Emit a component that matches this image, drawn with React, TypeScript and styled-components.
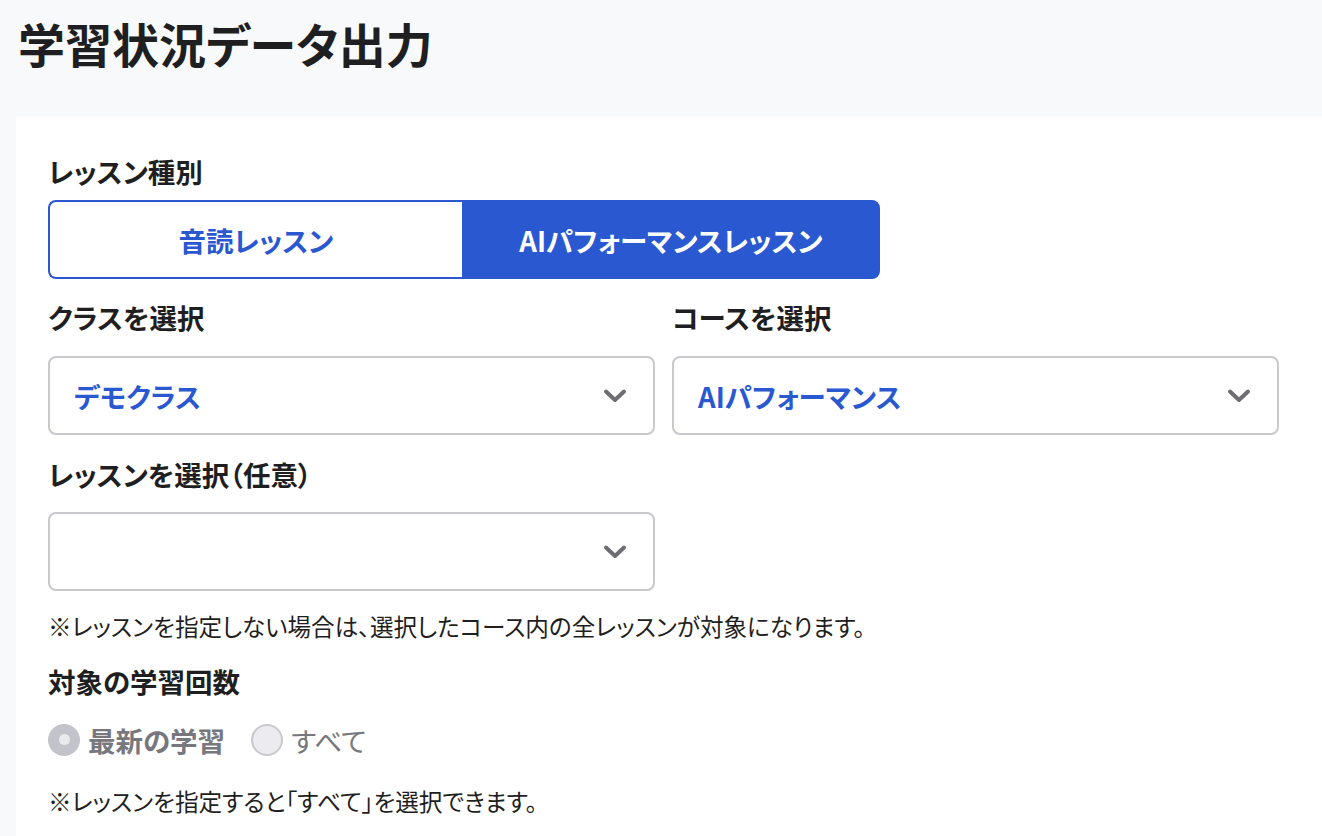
import styled, { createGlobalStyle } from "styled-components";

const GlobalStyle = createGlobalStyle`
  html, body {
    margin: 0;
    padding: 0;
    background: #f8f9fb;
    font-family: "Noto Sans CJK JP", "Noto Sans", sans-serif;
    font-feature-settings: "palt";
    color: #1f1f21;
  }
`;

const Page = styled.div`
  min-height: 836px;
  background: #f8f9fb;
`;

const Header = styled.header`
  padding: 11px 18px 42px;
`;

const Title = styled.h1`
  margin: 0;
  font-size: 47px;
  line-height: 64px;
  font-weight: 700;
`;

const Card = styled.section`
  margin-left: 16px;
  background: #fff;
  padding: 34px 43px 40px 32px;
`;

const Label = styled.h2<{ top?: number }>`
  margin: ${(p) => p.top ?? 0}px 0 0;
  font-size: 27.5px;
  line-height: 40px;
  font-weight: 700;
`;

const Segment = styled.div`
  margin-top: 9px;
  display: grid;
  grid-template-columns: 414px 418px;
  width: 832px;
  height: 79px;
`;

const SegButton = styled.button<{ active?: boolean }>`
  font-family: inherit;
  font-feature-settings: "palt";
  font-size: 27.5px;
  font-weight: 700;
  border: 2px solid #2a58d0;
  background: ${(p) => (p.active ? "#2a58d0" : "#fff")};
  color: ${(p) => (p.active ? "#fff" : "#2a58d0")};
  border-radius: ${(p) => (p.active ? "0 8px 8px 0" : "8px 0 0 8px")};
  border-right-width: ${(p) => (p.active ? "2px" : "0")};
  cursor: pointer;
`;

const Row = styled.div`
  display: grid;
  grid-template-columns: 1fr 1fr;
  column-gap: 17px;
`;

const Field = styled.div``;

const Select = styled.div<{ top: number }>`
  margin-top: ${(p) => p.top}px;
  height: 79px;
  box-sizing: border-box;
  border: 2px solid #c8c8cd;
  border-radius: 8px;
  display: flex;
  align-items: center;
  justify-content: space-between;
  padding: 0 26px 0 24px;
  color: #2a58d0;
  font-size: 27.5px;
  font-weight: 700;
`;

const HalfSelect = styled(Select)`
  width: 607px;
`;

const Note = styled.p<{ top: number }>`
  margin: ${(p) => p.top}px 0 0;
  font-size: 23.6px;
  line-height: 32px;
  font-weight: 400;
`;

const RadioRow = styled.div`
  margin-top: 23px;
  display: flex;
  align-items: center;
  gap: 26px;
  height: 32px;
`;

const RadioItem = styled.label<{ bold?: boolean }>`
  display: flex;
  align-items: center;
  gap: 8px;
  color: #77777d;
  font-size: 27.5px;
  font-weight: ${(p) => (p.bold ? 700 : 400)};
`;

const RadioDot = styled.span<{ checked?: boolean }>`
  width: 32px;
  height: 32px;
  box-sizing: border-box;
  border-radius: 50%;
  background: ${(p) => (p.checked ? "#c2c3cb" : "#ececf0")};
  border: ${(p) => (p.checked ? "none" : "2px solid #c9c9ce")};
  display: flex;
  align-items: center;
  justify-content: center;
  &::after {
    content: "";
    display: ${(p) => (p.checked ? "block" : "none")};
    width: 11px;
    height: 11px;
    border-radius: 50%;
    background: #ebebef;
  }
`;

function Chevron() {
  return (
    <svg width="24" height="16" viewBox="0 0 24 16" fill="none">
      <path d="M3 3.5 L12 12 L21 3.5" stroke="#6d6d72" strokeWidth="4" strokeLinecap="round" strokeLinejoin="round" />
    </svg>
  );
}

export default function App() {
  return (
    <Page>
      <GlobalStyle />
      <Header>
        <Title>学習状況データ出力</Title>
      </Header>
      <Card>
        <Label>レッスン種別</Label>
        <Segment>
          <SegButton>音読レッスン</SegButton>
          <SegButton active>AIパフォーマンスレッスン</SegButton>
        </Segment>

        <Row>
          <Field>
            <Label top={18}>クラスを選択</Label>
            <Select top={19}>
              <span>デモクラス</span>
              <Chevron />
            </Select>
          </Field>
          <Field>
            <Label top={18}>コースを選択</Label>
            <Select top={19}>
              <span>AIパフォーマンス</span>
              <Chevron />
            </Select>
          </Field>
        </Row>

        <Label top={18.5}>レッスンを選択（任意）</Label>
        <HalfSelect top={18.5}>
          <span />
          <Chevron />
        </HalfSelect>
        <Note top={19.3}>※レッスンを指定しない場合は、選択したコース内の全レッスンが対象になります。</Note>

        <Label top={18.7}>対象の学習回数</Label>
        <RadioRow>
          <RadioItem bold>
            <RadioDot checked />
            最新の学習
          </RadioItem>
          <RadioItem>
            <RadioDot />
            すべて
          </RadioItem>
        </RadioRow>
        <Note top={29.3}>※レッスンを指定すると「すべて」を選択できます。</Note>
      </Card>
    </Page>
  );
}
